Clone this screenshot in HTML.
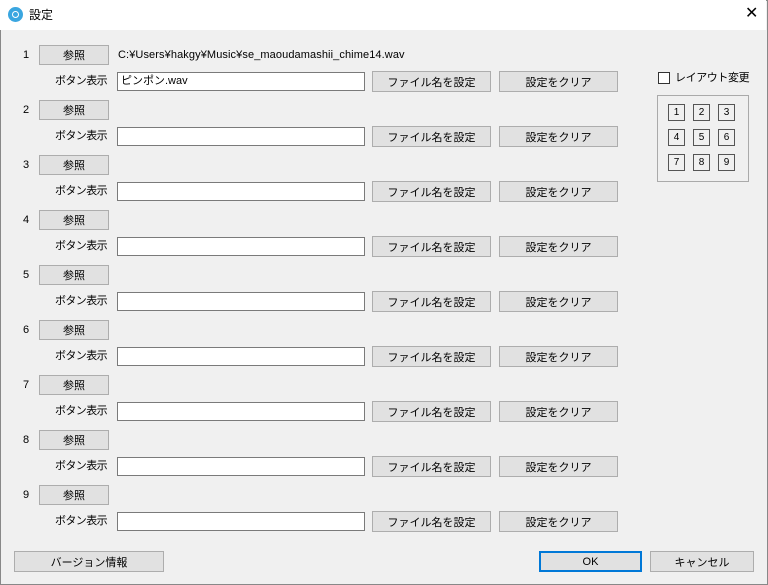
<!DOCTYPE html><html><head><meta charset="utf-8"><style>
*{box-sizing:border-box;margin:0;padding:0}
body{width:768px;height:585px;overflow:hidden;background:#f0f0f0;font-family:"Liberation Sans","Noto Sans CJK JP",sans-serif;font-size:11px;color:#000;position:relative}
.win{position:absolute;left:0;top:0;width:768px;height:585px;border:1px solid #888}
.title{position:absolute;left:0;top:0;width:766px;height:30px;background:#fff}
.a{position:absolute;white-space:nowrap;line-height:1}
.btn{position:absolute;background:#e1e1e1;border:1px solid #adadad;display:flex;align-items:center;justify-content:center;font-size:11px}
.inp{position:absolute;background:#fff;border:1px solid #7a7a7a;font-size:11px;padding-left:3px;line-height:16px}
.sb{position:absolute;width:17px;height:17px;border:1px solid #555;background:#f0f0f0;font-size:10px;display:flex;align-items:center;justify-content:center}
.lb{position:absolute;left:40px;width:67px;text-align:right;white-space:nowrap;line-height:1;letter-spacing:-0.6px}
</style></head><body>
<div class="win"></div>
<div class="title">
<div style="position:absolute;left:8px;top:7px;width:15px;height:15px;border-radius:50%;background:#3aa6e0"></div>
<div style="position:absolute;left:12px;top:11px;width:7px;height:7px;border-radius:50%;border:1.5px solid #fff"></div>
<div class="a" style="left:29px;top:9px;font-size:12px">設定</div>
<div class="a" style="left:745px;top:6px;font-size:16px">✕</div>
</div>
<div id="rows"></div>
<script>
var h='';
for(var i=0;i<9;i++){var y=45+55*i;
h+='<div class="a" style="left:23px;top:'+(y+5)+'px">'+(i+1)+'</div>';
h+='<div class="btn" style="left:39px;top:'+y+'px;width:70px;height:20px">参照</div>';
if(i==0)h+='<div class="a" style="left:118px;top:'+(y+5)+'px;letter-spacing:0.1px">C:¥Users¥hakgy¥Music¥se_maoudamashii_chime14.wav</div>';
h+='<div class="lb" style="top:'+(y+31)+'px">ボタン表示</div>';
h+='<div class="inp" style="left:117px;top:'+(y+27)+'px;width:248px;height:19px">'+(i==0?'ピンポン.wav':'')+'</div>';
h+='<div class="btn" style="left:372px;top:'+(y+26)+'px;width:119px;height:21px">ファイル名を設定</div>';
h+='<div class="btn" style="left:499px;top:'+(y+26)+'px;width:119px;height:21px">設定をクリア</div>';}
document.getElementById('rows').innerHTML=h;
</script>
<div style="position:absolute;left:658px;top:72px;width:12px;height:12px;border:1px solid #333;background:#fff"></div>
<div class="a" style="left:675px;top:73px;letter-spacing:-0.4px">レイアウト変更</div>
<div style="position:absolute;left:657px;top:95px;width:92px;height:87px;border:1px solid #aaa"></div>
<div class="sb" style="left:668px;top:104px">1</div><div class="sb" style="left:693px;top:104px">2</div><div class="sb" style="left:718px;top:104px">3</div>
<div class="sb" style="left:668px;top:129px">4</div><div class="sb" style="left:693px;top:129px">5</div><div class="sb" style="left:718px;top:129px">6</div>
<div class="sb" style="left:668px;top:154px">7</div><div class="sb" style="left:693px;top:154px">8</div><div class="sb" style="left:718px;top:154px">9</div>
<div class="btn" style="left:14px;top:551px;width:150px;height:21px">バージョン情報</div>
<div class="btn" style="left:539px;top:551px;width:103px;height:21px;border:2px solid #0078d7">OK</div>
<div class="btn" style="left:650px;top:551px;width:104px;height:21px">キャンセル</div>
</body></html>
